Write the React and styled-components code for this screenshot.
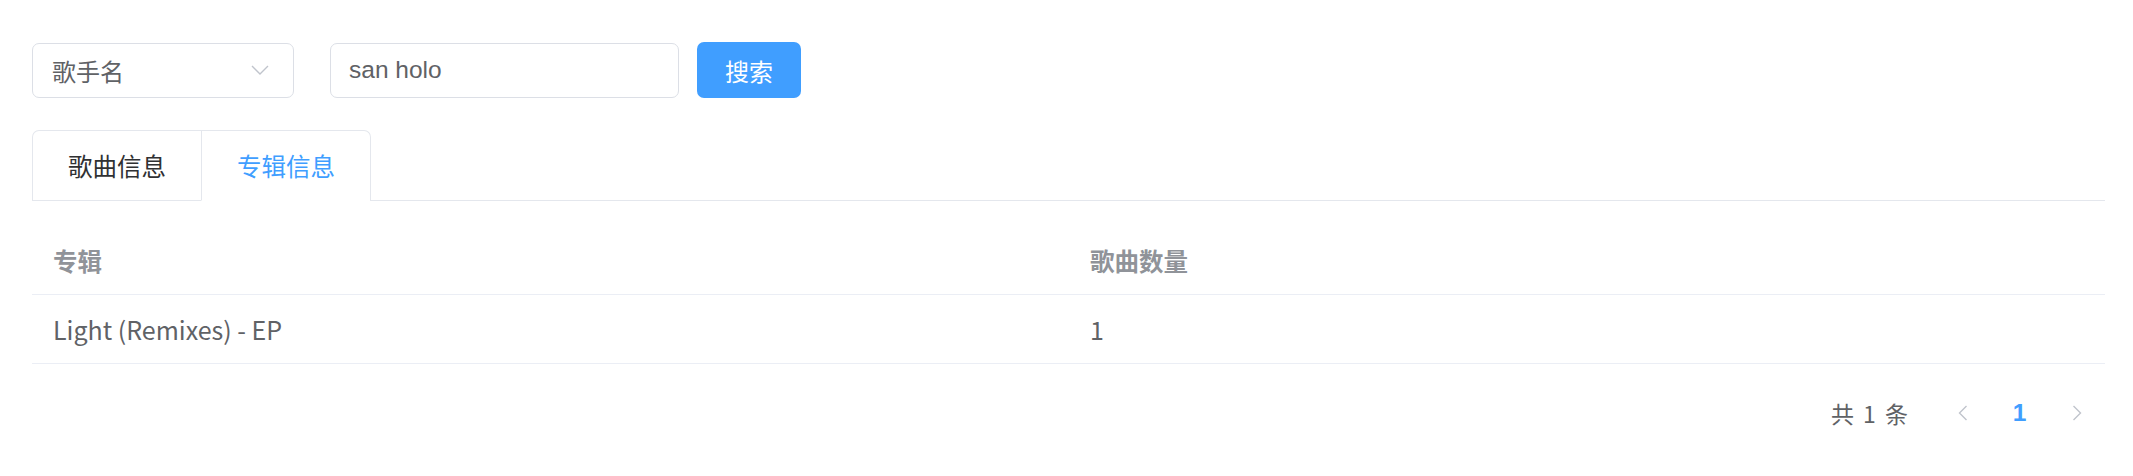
import React, { useState } from "react";
import styled, { createGlobalStyle } from "styled-components";

const Global = createGlobalStyle`
  html, body { margin: 0; padding: 0; background: #fff; }
  body {
    font-family: "Helvetica Neue", Helvetica, "Liberation Sans", "Noto Sans CJK SC", Arial, sans-serif;
    -webkit-font-smoothing: antialiased;
  }
  * { box-sizing: border-box; }
`;

const Page = styled.div`
  padding: 42px 28px 0 32px;
`;

const Toolbar = styled.div`
  display: flex;
  align-items: center;
  height: 56px;
`;

const Select = styled.div`
  width: 262px;
  height: 55px;
  border: 1px solid #dcdfe6;
  border-radius: 7px;
  display: flex;
  align-items: center;
  justify-content: space-between;
  padding: 0 24px 0 19px;
  margin-right: 36px;
  color: #606266;
  font-size: 24px;
  font-family: "Noto Sans CJK SC", sans-serif;
`;

const Input = styled.div`
  width: 349px;
  height: 55px;
  border: 1px solid #dcdfe6;
  border-radius: 7px;
  display: flex;
  align-items: center;
  padding: 0 18px;
  color: #606266;
  font-size: 24.5px;
  font-family: "Liberation Sans", Arial, sans-serif;
  margin-right: 18px;
`;

const Button = styled.button`
  width: 104px;
  height: 56px;
  border: none;
  border-radius: 7px;
  background: #409eff;
  color: #fff;
  font-size: 24px;
  font-family: "Noto Sans CJK SC", sans-serif;
  padding: 0;
  display: flex;
  align-items: center;
  justify-content: center;
`;

const TabsHeader = styled.div`
  margin-top: 32px;
  display: flex;
  border-bottom: 1px solid #e4e7ed;
  height: 71px;
`;

const TabNav = styled.div`
  display: flex;
  border: 1px solid #e4e7ed;
  border-bottom: none;
  border-radius: 7px 7px 0 0;
  margin-bottom: -1px;
`;

const Tab = styled.div`
  height: 70px;
  padding: 0 35px;
  display: flex;
  align-items: center;
  font-size: 24.5px;
  font-family: "Noto Sans CJK SC", sans-serif;
  color: ${(p) => (p.$active ? "#409eff" : "#303133")};
  border-bottom: 1px solid ${(p) => (p.$active ? "#fff" : "transparent")};
  & + & {
    border-left: 1px solid #e4e7ed;
  }
`;

const Table = styled.div`
  margin-top: 25px;
  display: grid;
  grid-template-columns: 1037px 1fr;
`;

const Cell = styled.div`
  height: 69px;
  border-bottom: 1px solid #ebeef5;
  display: flex;
  align-items: center;
  padding-left: 21px;
  font-family: "Noto Sans CJK SC", sans-serif;
  font-size: ${(p) => (p.$head ? "24.5px" : "25px")};
  font-weight: ${(p) => (p.$head ? 700 : 400)};
  color: ${(p) => (p.$head ? "#909399" : "#606266")};
`;

const Pagination = styled.div`
  margin-top: 24px;
  height: 49px;
  display: flex;
  justify-content: flex-end;
  align-items: center;
  font-family: "Noto Sans CJK SC", sans-serif;
`;

const Total = styled.span`
  font-size: 23px;
  color: #606266;
  margin-right: 26px;
  word-spacing: 4px;
`;

const PageBtn = styled.div`
  width: 57px;
  height: 49px;
  display: flex;
  align-items: center;
  justify-content: center;
  font-size: 24.5px;
  font-weight: 700;
  font-family: "Liberation Sans", Arial, sans-serif;
  color: ${(p) => (p.$active ? "#409eff" : "#c0c4cc")};
`;

const Chevron = ({ dir }) => (
  <svg width="10" height="16" viewBox="0 0 10 16" fill="none">
    <polyline
      points={dir === "left" ? "8.5,1 1.5,8 8.5,15" : "1.5,1 8.5,8 1.5,15"}
      stroke="#c0c4cc"
      strokeWidth="1.4"
      strokeLinejoin="miter"
    />
  </svg>
);

const DownArrow = () => (
  <svg width="18" height="10" viewBox="0 0 18 10" fill="none">
    <polyline points="1,1 9,9 17,1" stroke="#c0c4cc" strokeWidth="1.4" />
  </svg>
);

export default function App() {
  const [active, setActive] = useState(1);
  const rows = [{ album: "Light (Remixes) - EP", count: 1 }];
  return (
    <Page>
      <Global />
      <Toolbar>
        <Select>
          <span>歌手名</span>
          <DownArrow />
        </Select>
        <Input>san holo</Input>
        <Button>搜索</Button>
      </Toolbar>
      <TabsHeader>
        <TabNav>
          {["歌曲信息", "专辑信息"].map((t, i) => (
            <Tab key={t} $active={i === active} onClick={() => setActive(i)}>
              {t}
            </Tab>
          ))}
        </TabNav>
      </TabsHeader>
      <Table>
        <Cell $head>专辑</Cell>
        <Cell $head>歌曲数量</Cell>
        {rows.map((r) => (
          <React.Fragment key={r.album}>
            <Cell>{r.album}</Cell>
            <Cell>{r.count}</Cell>
          </React.Fragment>
        ))}
      </Table>
      <Pagination>
        <Total>共 1 条</Total>
        <PageBtn>
          <Chevron dir="left" />
        </PageBtn>
        <PageBtn $active>1</PageBtn>
        <PageBtn>
          <Chevron dir="right" />
        </PageBtn>
      </Pagination>
    </Page>
  );
}
